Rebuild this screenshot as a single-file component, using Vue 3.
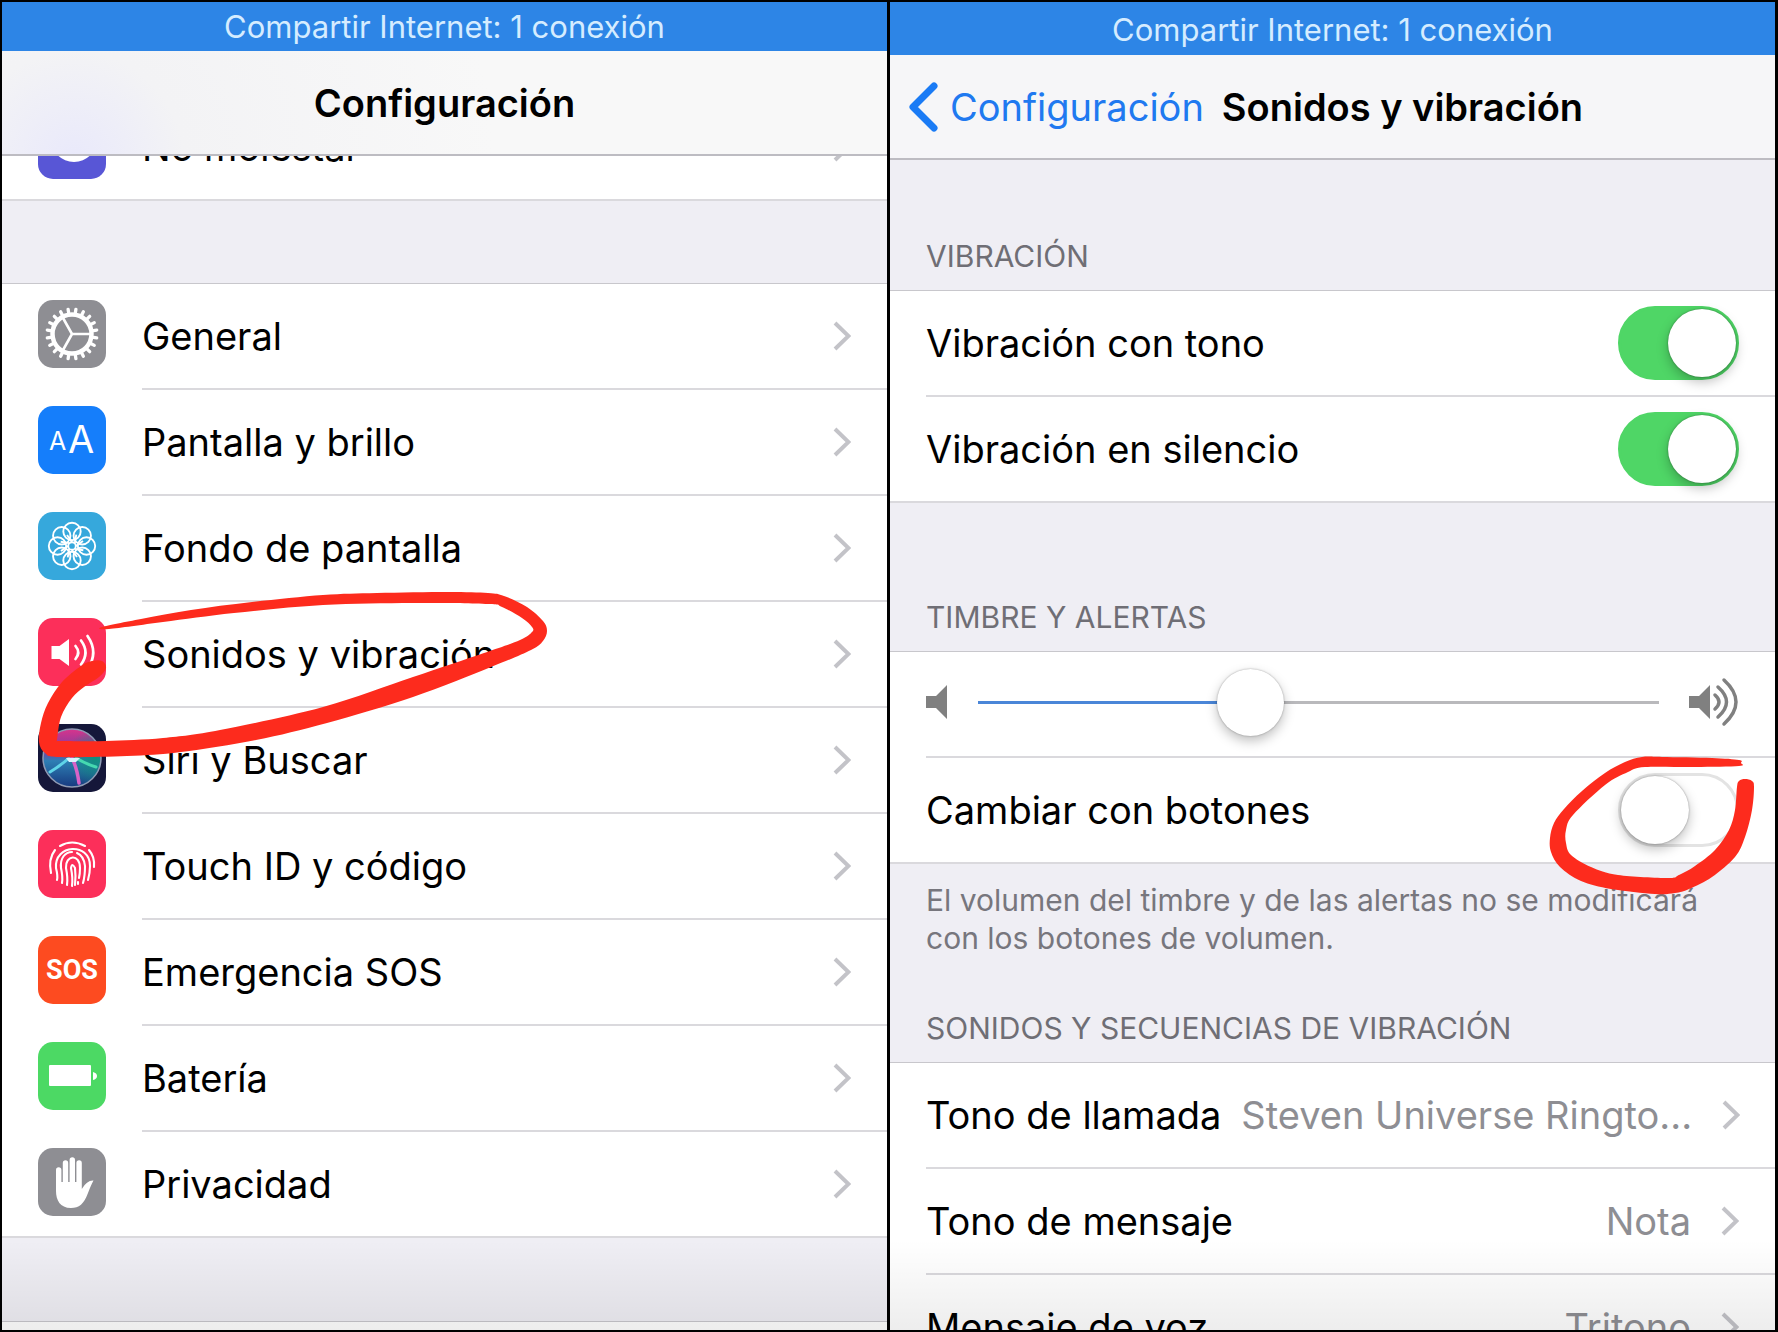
<script setup>
import { ref } from 'vue';

const notice = "Compartir Internet: 1 conexión";

const items = [
  { id: "general", label: "General", color: "#8e8e93" },
  { id: "display", label: "Pantalla y brillo", color: "#157efb" },
  { id: "wallpaper", label: "Fondo de pantalla", color: "#36a8dc" },
  { id: "sounds", label: "Sonidos y vibración", color: "#fc2f5a", marked: true },
  { id: "siri", label: "Siri y Buscar", color: "#15173a" },
  { id: "touch", label: "Touch ID y código", color: "#fc2f5a" },
  { id: "sos", label: "Emergencia SOS", color: "#fd4b20" },
  { id: "battery", label: "Batería", color: "#4cd964" },
  { id: "privacy", label: "Privacidad", color: "#8e8e93" },
];

const tones = [
  { label: "Tono de llamada", value: "Steven Universe Ringto..." },
  { label: "Tono de mensaje", value: "Nota" },
  { label: "Mensaje de voz", value: "Tritono" },
];

const ringVibration = ref(true);
const silentVibration = ref(true);
const changeWithButtons = ref(false);
const volume = ref(39);

//closed smooth curve through the given points
function smooth(points) {
  const n = points.length;
  let d = `M${points[0]}`;
  for (let i = 0; i < n; i++) {
    const [p0, p1, p2, p3] = [-1, 0, 1, 2].map((k) => points[(i + k + n) % n]);
    const a = [p1[0] + (p2[0] - p0[0]) / 6, p1[1] + (p2[1] - p0[1]) / 6];
    const b = [p2[0] - (p3[0] - p1[0]) / 6, p2[1] - (p3[1] - p1[1]) / 6];
    d += `C${a} ${b} ${p2}`;
  }
  return d + "Z";
}

const rowMark = smooth([
  [102, 627], [141, 619], [191, 610], [252, 602], [323, 595], [377, 593], [448, 592], [488, 593],
  [504, 596], [527, 607], [543, 621], [547, 631], [543, 641], [531, 650], [491, 667], [413, 697],
  [327, 723], [256, 740], [181, 752], [127, 756], [59, 757], [45, 753], [39, 742], [41, 723],
  [48, 703], [62, 682], [81, 666], [92, 661], [102, 661], [106, 668], [99, 677], [84, 687],
  [72, 698], [61, 717], [57, 740], [57, 741], [58, 741], [106, 741], [163, 738], [220, 730],
  [323, 707], [413, 677], [484, 653], [520, 640], [532, 632], [532, 627], [522, 618], [502, 607],
  [488, 604], [413, 603], [323, 605], [234, 613], [163, 622], [109, 629],
]);

const switchMark = smooth([
  [1740, 760], [1713, 758], [1663, 757], [1643, 757], [1626, 762], [1606, 773], [1583, 791],
  [1565, 809], [1555, 823], [1551, 838], [1552, 852], [1561, 867], [1582, 881], [1612, 889],
  [1656, 894], [1676, 893], [1690, 889], [1713, 877], [1736, 857], [1746, 837], [1753, 810],
  [1755, 787], [1753, 781], [1746, 779], [1740, 781], [1738, 787], [1736, 810], [1730, 830],
  [1716, 850], [1696, 866], [1680, 875], [1669, 878], [1619, 875], [1592, 867], [1572, 855],
  [1567, 843], [1567, 830], [1574, 815], [1606, 785], [1629, 772], [1646, 767], [1696, 767],
  [1740, 766], [1742, 763],
]);
</script>

<template>
  <main class="screens">
    <section class="screen">
      <div class="status">{{ notice }}</div>
      <header class="nav tinted">
        <h1>Configuración</h1>
      </header>

      <div class="clipped">
        <a class="row" href="#">
          <svg class="icon" viewBox="0 0 68 68">
            <rect width="68" height="68" rx="15" fill="#5856d6" />
            <circle cx="36" cy="28" r="23" fill="#fff" />
          </svg>
          <span class="body">
            <span class="label">No molestar</span>
            <svg class="chevron" viewBox="0 0 18 30"><path d="M2 2 15.500 15 2 28" /></svg>
          </span>
        </a>
      </div>

      <nav class="group main-list">
        <a v-for="item in items" :key="item.id" class="row" href="#">
          <svg class="icon" viewBox="0 0 68 68">
            <defs v-if="item.id === 'siri'">
              <linearGradient id="siri-fill" x1="0" y1="0" x2="0" y2="1">
                <stop offset="0" stop-color="#d8348c" />
                <stop offset="0.38" stop-color="#7d3c9e" />
                <stop offset="0.55" stop-color="#2e7fb4" />
                <stop offset="1" stop-color="#173a80" />
              </linearGradient>
              <radialGradient id="siri-right" cx="0.9" cy="0.5" r="0.5">
                <stop offset="0" stop-color="#0f8f7c" />
                <stop offset="1" stop-color="#0f8f7c" stop-opacity="0" />
              </radialGradient>
            </defs>
            <rect width="68" height="68" rx="15" :fill="item.color" />

            <g v-if="item.id === 'general'" fill="none" stroke="#fff">
              <circle cx="34" cy="34" r="19.500" stroke-width="4.500" />
              <path v-for="n in 20" :key="n" d="M54 34H59" stroke-width="3.300" stroke-linecap="round" :transform="`rotate(${n * 18 + 9} 34 34)`" />
              <path d="M34 34H52M34 34 25 18M34 34 25 50" stroke-width="2.600" />
            </g>

            <g v-else-if="item.id === 'display'" class="letters">
              <text x="11" y="44" font-size="25">A</text>
              <text x="30" y="47" font-size="38">A</text>
            </g>

            <g v-else-if="item.id === 'wallpaper'" fill="none" stroke="#fff" stroke-width="1.900">
              <g v-for="n in 8" :key="n" :transform="`rotate(${n * 45} 34 34)`">
                <circle cx="34" cy="19.500" r="8.700" />
                <path d="M34 30 29 23" />
              </g>
              <circle cx="34" cy="34" r="3.800" />
            </g>

            <g v-else-if="item.id === 'sounds'" fill="none" stroke="#fff" stroke-width="2.700" stroke-linecap="round">
              <path d="M13.500 28H21.500L31 21V48L21.500 41H13.500Z" fill="#fff" stroke="none" />
              <path d="M37.500 28Q43 34.500 37.500 41M43 22.500Q52 34.500 43 46.500M49.500 18Q61 34.500 49.500 51" />
            </g>

            <g v-else-if="item.id === 'siri'" fill="none" stroke-linecap="round">
              <circle cx="34" cy="34" r="29" fill="url(#siri-fill)" />
              <circle cx="34" cy="34" r="29" fill="url(#siri-right)" stroke="#8f9bb5" stroke-width="1.500" />
              <path d="M12 48Q22 42 31 34" stroke="#5fd5e8" stroke-width="3" />
              <path d="M38 34Q48 40 58 43" stroke="#45d9b0" stroke-width="3" />
              <path d="M34 34Q39 44 41 59" stroke="#d863c8" stroke-width="3.500" />
              <path d="M28 34H42L38 38H31Z" fill="#d9f4ff" />
            </g>

            <g v-else-if="item.id === 'touch'" fill="none" stroke="#fff" stroke-width="2.100" stroke-linecap="round">
              <path d="M22 16Q34 9 47 16" />
              <path d="M17 20Q10 29 13 43M51 20Q57 27 56 37" />
              <path d="M19 50Q20 46 18 38C16 14 52 12 52 36Q52 43 50 50" />
              <path d="M24 53Q25 47 23 38C22 28 27 22 34 22M39 23Q46 26 47 36Q47 46 45 53" />
              <path d="M29 55Q30 48 28 38C27 25 42 23 42 38Q42 44 41 48M40 52V54" />
              <path d="M34 56Q35 48 33 38Q34 32 37 38Q38 46 37 55" />
            </g>

            <text v-else-if="item.id === 'sos'" class="sos" x="34" y="43" text-anchor="middle">SOS</text>

            <g v-else-if="item.id === 'battery'" fill="#fff">
              <rect x="11" y="23" width="42" height="21" rx="1" />
              <path d="M55 30Q59 31 59 34Q59 37 55 38Z" />
            </g>

            <g v-else fill="#fff">
              <path d="M18 22a2.700 2.700 0 0 1 5.400 0V34H24.800V15a2.700 2.700 0 0 1 5.400 0V34H31.600V12a2.700 2.700 0 0 1 5.400 0V34H38.400V15a2.700 2.700 0 0 1 5.400 0V41Q49 32 55.500 32.500Q53 37 50 45C46 56 41 60 33 60C22 60 18 52 18 43Z" />
            </g>
          </svg>
          <span class="body">
            <span class="label">{{ item.label }}</span>
            <svg class="chevron" viewBox="0 0 18 30"><path d="M2 2 15.500 15 2 28" /></svg>
          </span>
          <svg v-if="item.marked" class="mark row-mark" viewBox="2 602 560 160"><path :d="rowMark" /></svg>
        </a>
      </nav>

      <div class="group next-list"></div>
    </section>

    <section class="screen">
      <div class="status tall">{{ notice }}</div>
      <header class="nav">
        <button class="back" type="button">
          <svg viewBox="0 0 30 50"><path d="M26 4 5 25 26 46" /></svg>
          Configuración
        </button>
        <h1>Sonidos y vibración</h1>
      </header>

      <h2 class="caption first">VIBRACIÓN</h2>
      <div class="group">
        <label class="row">
          <span class="body">
            <span class="label">Vibración con tono</span>
            <input v-model="ringVibration" class="switch" type="checkbox" />
          </span>
        </label>
        <label class="row">
          <span class="body">
            <span class="label">Vibración en silencio</span>
            <input v-model="silentVibration" class="switch" type="checkbox" />
          </span>
        </label>
      </div>

      <h2 class="caption second">TIMBRE Y ALERTAS</h2>
      <div class="group">
        <div class="row">
          <span class="body volume">
            <svg class="speaker" viewBox="0 0 22 50"><path d="M0 19H10L21 8V42L10 31H0Z" fill="#808080" /></svg>
            <input
              v-model="volume"
              class="slider"
              type="range"
              min="0"
              max="100"
              aria-label="Volumen"
              :style="{ '--level': volume + '%' }"
            />
            <svg class="speaker loud" viewBox="0 0 50 50">
              <path d="M0 19H10L21 8V42L10 31H0Z" fill="#808080" />
              <path d="M26 18Q34 25 26 32M29 10Q46 25 29 40M35 3Q59 25 35 47" fill="none" stroke="#808080" stroke-width="3.500" stroke-linecap="round" />
            </svg>
          </span>
        </div>
        <label class="row">
          <span class="body">
            <span class="label">Cambiar con botones</span>
            <input v-model="changeWithButtons" class="switch" type="checkbox" />
          </span>
          <svg class="mark switch-mark" viewBox="1546 750 214 150"><path :d="switchMark" /></svg>
        </label>
      </div>
      <p class="note">El volumen del timbre y de las alertas no se modificará con los botones de volumen.</p>

      <h2 class="caption third">SONIDOS Y SECUENCIAS DE VIBRACIÓN</h2>
      <div class="group">
        <a v-for="tone in tones" :key="tone.label" class="row" href="#">
          <span class="body">
            <span class="label">{{ tone.label }}</span>
            <span class="value">{{ tone.value }}</span>
            <svg class="chevron" viewBox="0 0 18 30"><path d="M2 2 15.500 15 2 28" /></svg>
          </span>
        </a>
      </div>
    </section>
  </main>
</template>

<style>
body {
  margin: 0;
  background-color: #000;
}
</style>

<style scoped>
.screens {
  display: grid;
  grid-template-columns: 1fr 1fr;
  gap: 3px;
  height: 100vh;
  padding: 2px 3px 2px 2px;
  box-sizing: border-box;
  background-color: #000;
  font-family: Inter, "Liberation Sans", sans-serif;
  font-size: 38px;
  line-height: 48px;
  color: #000;
}

.screen {
  position: relative;
  min-width: 0;
  overflow: hidden;
  background-color: #efeef4;
}

/* shade along the bottom edge */
.screen::after {
  content: "";
  position: absolute;
  left: 0;
  right: 0;
  bottom: 0;
  height: 90px;
  background: linear-gradient(transparent, rgba(0, 0, 0, 0.07));
  pointer-events: none;
}

.status {
  height: 49px;
  line-height: 49px;
  text-align: center;
  font-size: 31px;
  color: #d5ecff;
  background-color: #2d85e6;
}

.status.tall {
  height: 53px;
  line-height: 56px;
}

.nav {
  display: flex;
  align-items: center;
  justify-content: center;
  height: 105px;
  box-sizing: border-box;
  border-bottom: 2px solid #bdbcc2;
  background-color: #f6f6f8;
}

.nav.tinted {
  background: radial-gradient(circle at 72px 110px, #e9e9fb, #f3f3f5 110px, #f8f8f8 420px);
}

.nav h1 {
  margin: 0;
  font-size: 38px;
  font-weight: 600;
  white-space: nowrap;
}

.back {
  display: flex;
  align-items: center;
  gap: 12px;
  margin-right: 18px;
  padding: 0;
  border: 0;
  background: none;
  font: inherit;
  color: #2079f0;
}

.back svg {
  width: 30px;
  height: 50px;
  fill: none;
  stroke: #1a7bf5;
  stroke-width: 7px;
  stroke-linecap: round;
  stroke-linejoin: round;
}

.screen:last-child .nav {
  justify-content: flex-start;
  padding-left: 18px;
}

.clipped {
  display: flex;
  flex-direction: column;
  justify-content: flex-end;
  height: 45px;
  overflow: hidden;
  background-color: #fff;
}

.group {
  border-top: 1px solid #c8c7cc;
  background-color: #fff;
}

.main-list {
  margin-top: 82px;
}

.next-list {
  height: 20px;
  margin-top: 83px;
}

.row {
  position: relative;
  display: flex;
  flex-shrink: 0;
  align-items: center;
  height: 106px;
  padding-left: 36px;
  color: inherit;
  text-decoration: none;
}

.icon {
  flex-shrink: 0;
  width: 68px;
  height: 68px;
  margin-right: 36px;
  margin-bottom: 6px;
}

.body {
  display: flex;
  flex: 1;
  align-items: center;
  min-width: 0;
  height: 106px;
  box-sizing: border-box;
  padding-right: 36px;
  border-bottom: 2px solid #dad9dd;
}

.body.volume {
  padding-bottom: 4px;
}

.row:last-child {
  box-shadow: inset 0 -2px #dad9dd;
}

.label {
  white-space: nowrap;
}

.value {
  flex: 1;
  margin: 0 30px 0 20px;
  text-align: right;
  white-space: nowrap;
  color: #8e8e93;
}

.chevron {
  flex-shrink: 0;
  width: 18px;
  height: 30px;
  margin-left: auto;
  fill: none;
  stroke: #c3c3c8;
  stroke-width: 4px;
}

.letters {
  fill: #fff;
  font-family: Inter, sans-serif;
}

.sos {
  fill: #fff;
  font-family: Roboto, sans-serif;
  font-size: 27px;
  font-weight: 700;
}

.caption {
  margin: 0;
  padding: 0 36px 15px;
  font-size: 30px;
  font-weight: 400;
  line-height: 38px;
  color: #6f6e75;
}

.caption.first {
  margin-top: 77px;
}

.caption.second {
  margin-top: 95px;
}

.caption.third {
  margin-top: 52px;
}

.note {
  margin: 0;
  padding: 17px 36px 0;
  font-size: 30px;
  line-height: 38px;
  color: #77767d;
}

.switch {
  appearance: none;
  position: relative;
  flex-shrink: 0;
  width: 121px;
  height: 74px;
  margin: 0 0 0 auto;
  border: 3px solid #e3e3e3;
  border-radius: 37px;
  background-color: #fff;
}

.switch::before {
  content: "";
  position: absolute;
  top: 0;
  left: 0;
  width: 68px;
  height: 68px;
  border-radius: 50%;
  background-color: #fff;
  box-shadow: 0 0 2px rgba(0, 0, 0, 0.4), 0 5px 12px rgba(0, 0, 0, 0.25);
}

.switch:checked {
  border-color: #4fd666;
  background-color: #4fd666;
}

.switch:checked::before {
  left: 47px;
}

.speaker {
  flex-shrink: 0;
  width: 22px;
  height: 50px;
}

.speaker.loud {
  width: 50px;
}

.slider {
  appearance: none;
  flex: 1;
  min-width: 0;
  height: 68px;
  margin: 0 30px;
  background: linear-gradient(to right, #4a86d8 var(--level), #b9b9bc var(--level)) center / 100% 3px no-repeat;
}

.slider::-webkit-slider-thumb {
  appearance: none;
  width: 67px;
  height: 67px;
  border-radius: 50%;
  background-color: #fff;
  box-shadow: 0 0 2px rgba(0, 0, 0, 0.35), 0 5px 12px rgba(0, 0, 0, 0.25);
}

/* hand drawn marks over the rows */
.mark {
  position: absolute;
  z-index: 1;
  overflow: visible;
  fill: #fd2b1d;
  pointer-events: none;
}

.row-mark {
  top: 0;
  left: 0;
  width: 560px;
  height: 160px;
}

.switch-mark {
  top: -8px;
  right: 16px;
  width: 214px;
  height: 150px;
}
</style>
